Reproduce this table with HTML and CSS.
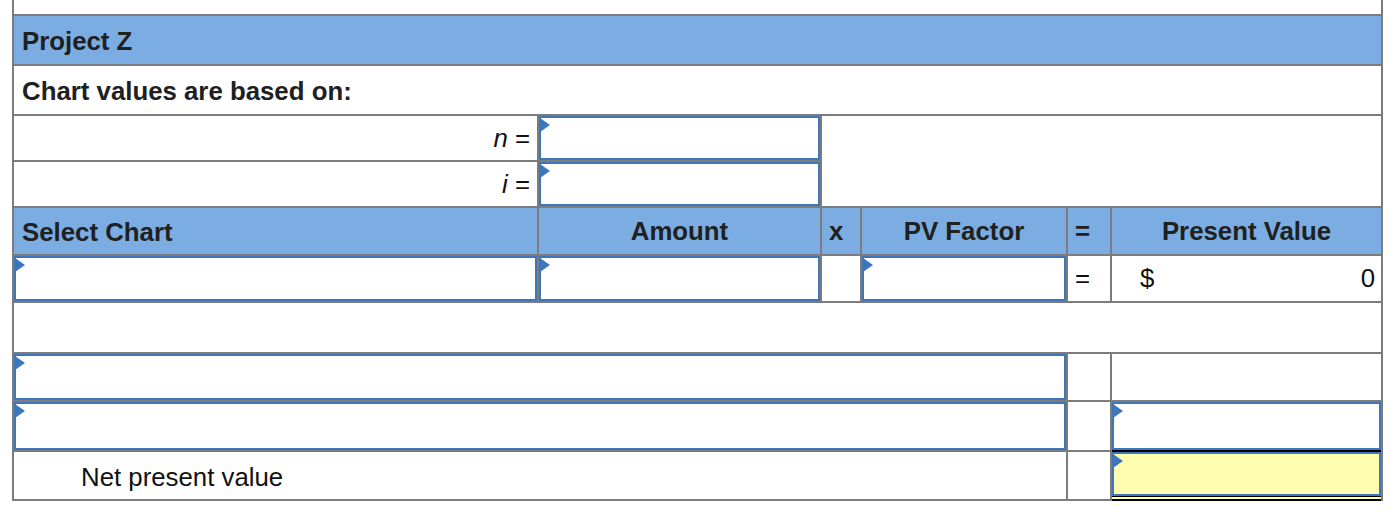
FILE: index.html
```html
<!DOCTYPE html>
<html>
<head>
<meta charset="utf-8">
<link rel="stylesheet" href="styles.css">
</head>
<body>
<div class="sheet">
  <div class="cell span-all"></div>
  <div class="cell span-all head bold left">Project Z</div>
  <div class="cell span-all bold left">Chart values are based on:</div>

  <div class="cell right"><span><i>n</i> =</span></div>
  <div class="cell entry"><div class="box"></div></div>
  <div class="cell filler"></div>

  <div class="cell right"><span><i>i</i> =</span></div>
  <div class="cell entry"><div class="box"></div></div>

  <div class="cell head bold left">Select Chart</div>
  <div class="cell head bold center">Amount</div>
  <div class="cell head bold op">x</div>
  <div class="cell head bold center">PV Factor</div>
  <div class="cell head bold op">=</div>
  <div class="cell head bold center">Present Value</div>

  <div class="cell entry"><div class="box"></div></div>
  <div class="cell entry"><div class="box"></div></div>
  <div class="cell"></div>
  <div class="cell entry"><div class="box"></div></div>
  <div class="cell op">=</div>
  <div class="cell money"><span>$</span><span>0</span></div>

  <div class="cell span-all"></div>

  <div class="cell span-4 entry"><div class="box"></div></div>
  <div class="cell"></div>
  <div class="cell"></div>

  <div class="cell span-4 entry"><div class="box"></div></div>
  <div class="cell"></div>
  <div class="cell entry underline"><div class="box"></div></div>

  <div class="cell span-4 npv">Net present value</div>
  <div class="cell"></div>
  <div class="cell entry double"><div class="box yellow"></div></div>
</div>
</body>
</html>
```

FILE: styles.css
```css
html, body {
  margin: 0;
  padding: 0;
  background: #ffffff;
}

body {
  font-family: "Liberation Sans", Arial, Helvetica, sans-serif;
  font-size: 25.8px;
  color: #111111;
}

.sheet {
  margin-left: 12px;
  width: 1371px;
  box-sizing: border-box;
  display: grid;
  grid-template-columns: 523px 281px 38px 204px 42px 269px;
  grid-template-rows: 14px 48px 48px 44px 44px 46px 45px 49px 46px 48px 47px;
  gap: 2px;
  padding: 0 2px 2px 2px;
  background: #7c7c7c;
}

.cell {
  background: #ffffff;
  display: flex;
  align-items: center;
  min-width: 0;
  position: relative;
}

.span-all { grid-column: 1 / -1; }
.span-4 { grid-column: 1 / 5; }

.filler {
  grid-column: 3 / 7;
  grid-row: 4 / 6;
}

.head {
  background: #7badE2;
}

.bold {
  font-weight: bold;
  color: #202020;
}

.left { padding-left: 8px; padding-top: 2px; }
.center { justify-content: center; }
.right {
  justify-content: flex-end;
  padding-right: 7px;
}
.op { padding-left: 7px; }

.money {
  justify-content: space-between;
  padding: 0 6px 0 28px;
}

.npv { padding-left: 67px; padding-top: 3px; }

.entry {
  align-items: stretch;
}

.box {
  flex: 1;
  box-sizing: border-box;
  border: 2px solid #3d76bc;
  background: #ffffff;
  position: relative;
}

.box::before {
  content: "";
  position: absolute;
  left: -1px;
  top: 0;
  width: 0;
  height: 0;
  border-left: 10px solid #3d76bc;
  border-top: 7px solid transparent;
  border-bottom: 7px solid transparent;
}

.yellow {
  background: #fffdb0;
}

.underline::after {
  content: "";
  position: absolute;
  left: 0;
  right: 0;
  bottom: -2px;
  height: 2px;
  background: #000000;
}

.double .box {
  flex: none;
  height: 44px;
  width: 100%;
}

.double {
  flex-direction: column;
  align-items: stretch;
}

.double::after {
  content: "";
  position: absolute;
  left: 0;
  right: 0;
  bottom: -2px;
  height: 5px;
  box-sizing: border-box;
  border-top: 1px solid #000000;
  border-bottom: 2px solid #000000;
  background: #fffdb0;
}
```
